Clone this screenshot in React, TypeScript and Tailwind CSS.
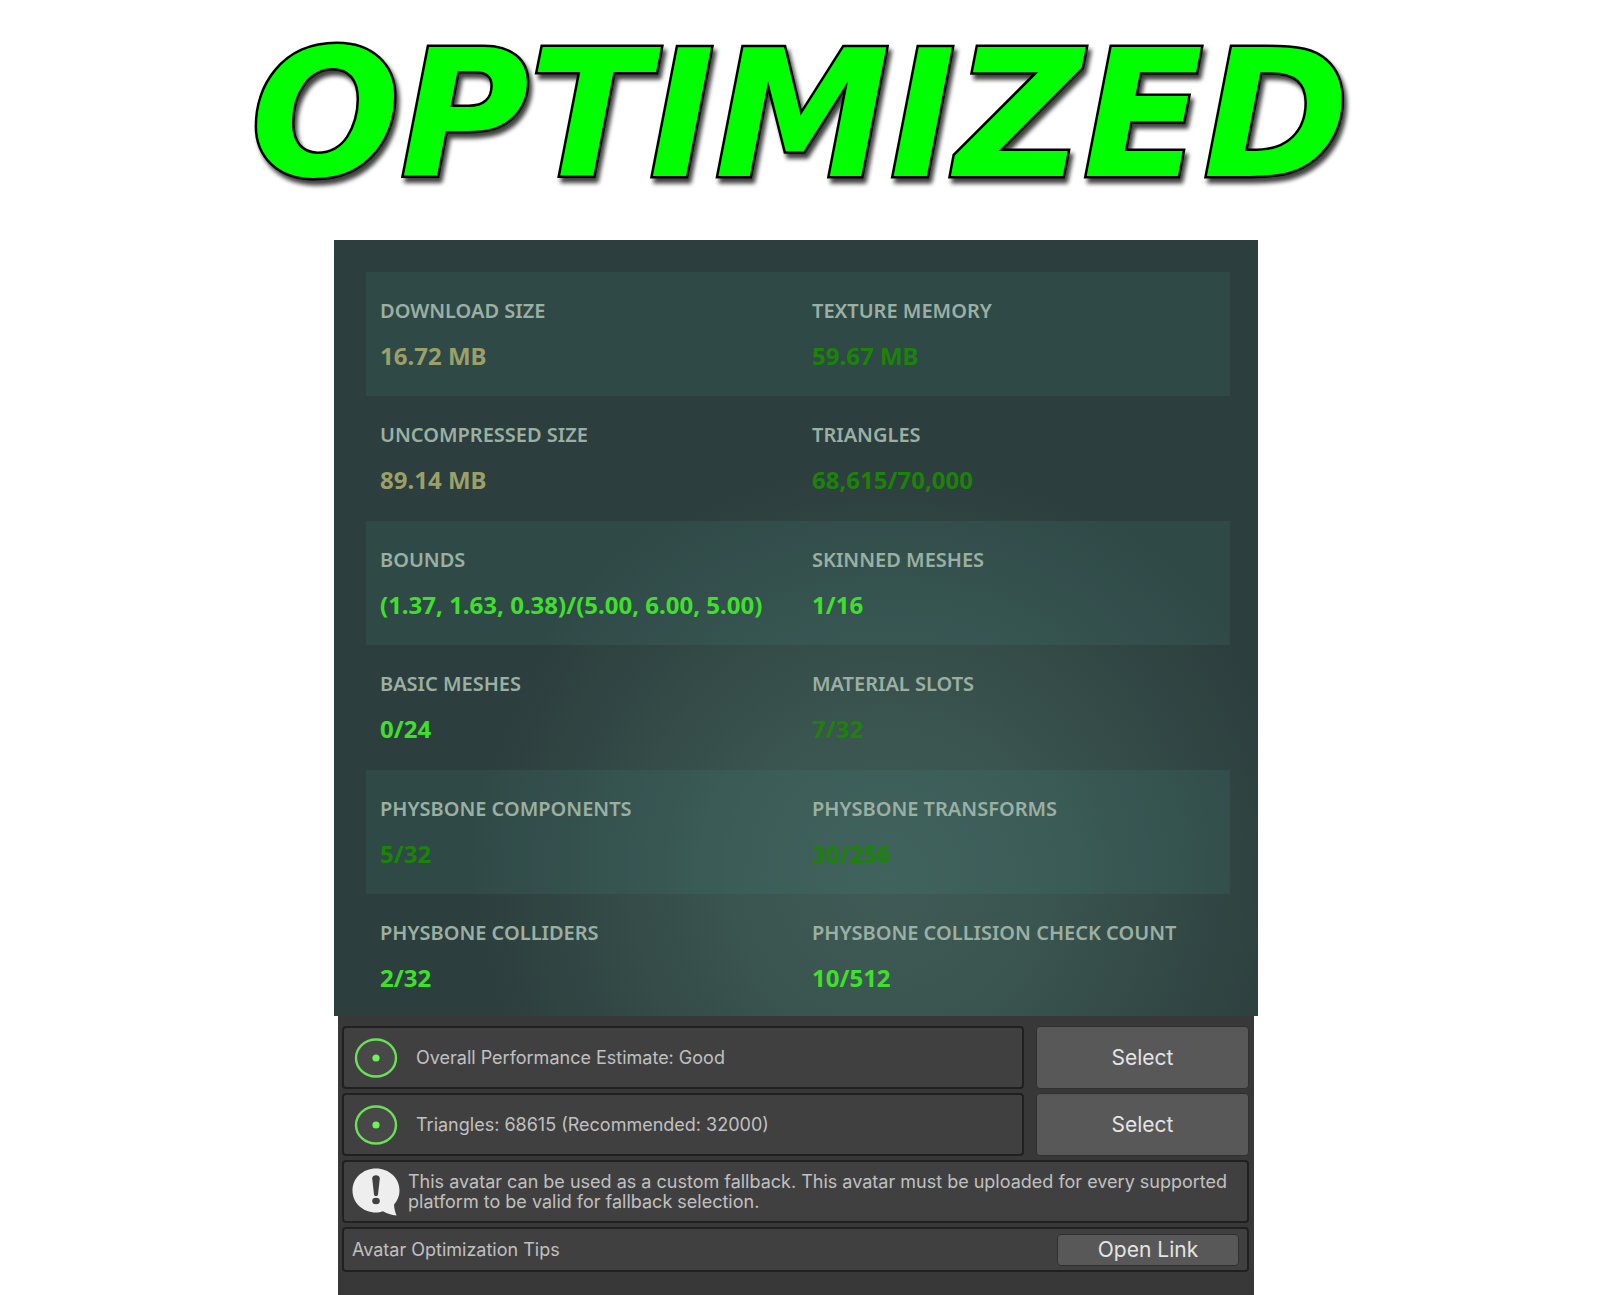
interface Stat {
  label: string;
  value: string;
  rating: 'medium' | 'good' | 'excellent';
}

const ratingColors = {
  medium: 'text-[#9ba068]',
  good: 'text-[#1c8209]',
  excellent: 'text-[#3fe02a]',
};

const stats: Stat[][] = [
  [
    { label: 'DOWNLOAD SIZE', value: '16.72 MB', rating: 'medium' },
    { label: 'TEXTURE MEMORY', value: '59.67 MB', rating: 'good' },
  ],
  [
    { label: 'UNCOMPRESSED SIZE', value: '89.14 MB', rating: 'medium' },
    { label: 'TRIANGLES', value: '68,615/70,000', rating: 'good' },
  ],
  [
    { label: 'BOUNDS', value: '(1.37, 1.63, 0.38)/(5.00, 6.00, 5.00)', rating: 'excellent' },
    { label: 'SKINNED MESHES', value: '1/16', rating: 'excellent' },
  ],
  [
    { label: 'BASIC MESHES', value: '0/24', rating: 'excellent' },
    { label: 'MATERIAL SLOTS', value: '7/32', rating: 'good' },
  ],
  [
    { label: 'PHYSBONE COMPONENTS', value: '5/32', rating: 'good' },
    { label: 'PHYSBONE TRANSFORMS', value: '30/256', rating: 'good' },
  ],
  [
    { label: 'PHYSBONE COLLIDERS', value: '2/32', rating: 'excellent' },
    { label: 'PHYSBONE COLLISION CHECK COUNT', value: '10/512', rating: 'excellent' },
  ],
];

const checks = ['Overall Performance Estimate: Good', 'Triangles: 68615 (Recommended: 32000)'];

function RatingIcon() {
  return (
    <svg width="44" height="42" viewBox="0 0 44 42" className="shrink-0" aria-hidden="true">
      <ellipse cx="22" cy="21" rx="20" ry="18.5" fill="#484848" stroke="#67e252" strokeWidth="2.4" />
      <circle cx="22" cy="21" r="3.6" fill="#6cf556" />
    </svg>
  );
}

function InfoIcon() {
  return (
    <svg width="48" height="48" viewBox="0 0 48 48" className="shrink-0" aria-hidden="true">
      <path
        d="M24 0.5C37 0.5 47.5 10 47.5 22.5C47.5 28 45.5 32.5 42 36.5C42.3 40.5 43 44 44.5 47.5C39.5 47 34.5 45.5 31 43.2C28.8 44 26.4 44.5 24 44.5C11 44.5 0.5 35 0.5 22.5C0.5 10 11 0.5 24 0.5Z"
        fill="#eeeeee"
      />
      <path d="M20.2 10.5C20.2 6.2 27.8 6.2 27.8 10.5L26 26.5C25.8 28.6 22.2 28.6 22 26.5Z" fill="#404040" />
      <ellipse cx="24" cy="33" rx="3.8" ry="3.3" fill="#404040" />
    </svg>
  );
}

export default function App() {
  return (
    <main className="flex min-h-screen flex-col items-center bg-white pr-2">
      <h1 className="flex h-[240px] items-center pb-2 pl-2 font-['DejaVu_Sans',sans-serif] text-[176px] leading-none font-bold text-[#00ff00] italic drop-shadow-[3px_5px_2px_rgba(0,0,0,0.75)] [-webkit-text-stroke:5px_black] [paint-order:stroke_fill]">
        OPTIMIZED
      </h1>

      <section className="w-full max-w-[924px] bg-[#2c3e3d] bg-[radial-gradient(circle_420px_at_60%_82%,#405b57,#3a544f_38%,#2c3e3d)] pt-8 pr-7 pl-8 font-['Noto_Sans',sans-serif]">
        {stats.map((row, index) => (
          <dl
            key={index}
            className="grid grid-cols-2 pt-6 pb-[23px] odd:bg-[#4c9c98]/12 odd:pb-[22px] last:pb-5"
          >
            {row.map((stat) => (
              <div key={stat.label} className="pl-[14px]">
                <dt className="text-[20px] leading-[30px] font-semibold whitespace-nowrap text-[#9bb0a2]">
                  {stat.label}
                </dt>
                <dd className={`pt-3 text-2xl leading-9 font-bold whitespace-nowrap ${ratingColors[stat.rating]}`}>
                  {stat.value}
                </dd>
              </div>
            ))}
          </dl>
        ))}
      </section>

      <section className="flex w-full max-w-[916px] grow flex-col gap-1 bg-[#383838] pt-[10px] pr-[5px] pb-6 pl-1 font-['Inter',sans-serif] text-[18px] text-[#c0c0c0]">
        {checks.map((check) => (
          <div key={check} className="flex gap-3">
            <div className="flex h-[63px] grow items-center gap-[18px] rounded border-2 border-[#202020] bg-[#404040] pl-[10px]">
              <RatingIcon />
              <p>{check}</p>
            </div>
            <button className="w-[213px] rounded border border-[#303030] bg-[#585858] text-[21px] text-[#e4e4e4]">
              Select
            </button>
          </div>
        ))}

        <div className="flex h-[63px] items-center gap-2 rounded border-2 border-[#202020] bg-[#404040] pl-2">
          <InfoIcon />
          <p className="leading-5">
            This avatar can be used as a custom fallback. This avatar must be uploaded for every supported
            platform to be valid for fallback selection.
          </p>
        </div>

        <div className="flex h-[45px] items-center justify-between rounded border-2 border-[#202020] bg-[#404040] pr-2 pl-2">
          <p>Avatar Optimization Tips</p>
          <button className="h-8 w-[182px] rounded border border-[#303030] bg-[#585858] text-[21px] leading-none text-[#e4e4e4]">
            Open Link
          </button>
        </div>
      </section>
    </main>
  );
}
